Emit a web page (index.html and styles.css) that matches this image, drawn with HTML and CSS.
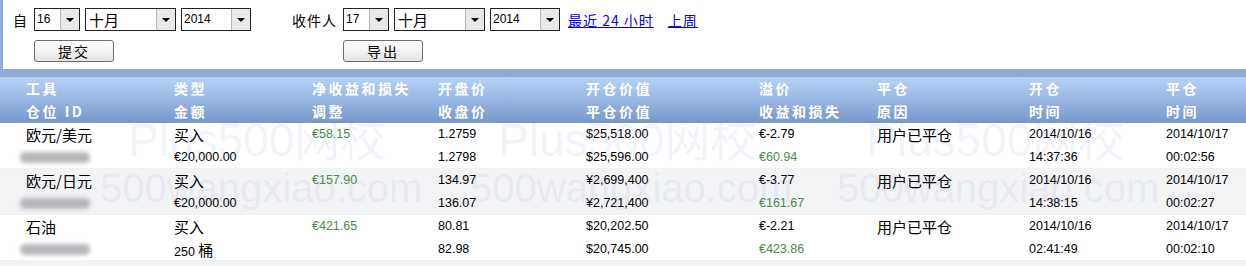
FILE: index.html
```html
<!DOCTYPE html>
<html lang="zh-CN">
<head>
    <meta charset="UTF-8">
    <title>平仓头寸</title>
    <link rel="stylesheet" href="styles.css">
</head>
<body>
    <div class="filter-panel">
        <div class="filter-group">
            <span class="filter-label">自</span>
            <div class="controls">
                <div class="dropdown day"><span class="dropdown-value">16</span><span class="dropdown-arrow"></span></div>
                <div class="dropdown month"><span class="dropdown-value cn">十月</span><span class="dropdown-arrow"></span></div>
                <div class="dropdown year"><span class="dropdown-value">2014</span><span class="dropdown-arrow"></span></div>
            </div>
            <span></span>
            <button class="btn">提交</button>
        </div>
        <div class="filter-group">
            <span class="filter-label">收件人</span>
            <div class="controls">
                <div class="dropdown day"><span class="dropdown-value">17</span><span class="dropdown-arrow"></span></div>
                <div class="dropdown month"><span class="dropdown-value cn">十月</span><span class="dropdown-arrow"></span></div>
                <div class="dropdown year"><span class="dropdown-value">2014</span><span class="dropdown-arrow"></span></div>
                <a href="#" class="quick-link">最近 24 小时</a>
                <a href="#" class="quick-link">上周</a>
            </div>
            <span></span>
            <button class="btn">导出</button>
        </div>
    </div>

    <div class="positions">
        <div class="row head">
            <div><span>工具</span><span>仓位 ID</span></div>
            <div><span>类型</span><span>金额</span></div>
            <div><span>净收益和损失</span><span>调整</span></div>
            <div><span>开盘价</span><span>收盘价</span></div>
            <div><span>开仓价值</span><span>平仓价值</span></div>
            <div><span>溢价</span><span>收益和损失</span></div>
            <div><span>平仓</span><span>原因</span></div>
            <div><span>开仓</span><span>时间</span></div>
            <div><span>平仓</span><span>时间</span></div>
        </div>

        <div class="row">
            <div><span class="cn">欧元/美元</span><span><i class="blurred"></i></span></div>
            <div><span class="cn">买入</span><span>€20,000.00</span></div>
            <div><span class="gain">€58.15</span></div>
            <div><span>1.2759</span><span>1.2798</span></div>
            <div><span>$25,518.00</span><span>$25,596.00</span></div>
            <div><span>€-2.79</span><span class="gain">€60.94</span></div>
            <div><span class="cn">用户已平仓</span></div>
            <div><span>2014/10/16</span><span>14:37:36</span></div>
            <div><span>2014/10/17</span><span>00:02:56</span></div>
        </div>

        <div class="row alt">
            <div><span class="cn">欧元/日元</span><span><i class="blurred"></i></span></div>
            <div><span class="cn">买入</span><span>€20,000.00</span></div>
            <div><span class="gain">€157.90</span></div>
            <div><span>134.97</span><span>136.07</span></div>
            <div><span>¥2,699,400</span><span>¥2,721,400</span></div>
            <div><span>€-3.77</span><span class="gain">€161.67</span></div>
            <div><span class="cn">用户已平仓</span></div>
            <div><span>2014/10/16</span><span>14:38:15</span></div>
            <div><span>2014/10/17</span><span>00:02:27</span></div>
        </div>

        <div class="row">
            <div><span class="cn">石油</span><span><i class="blurred"></i></span></div>
            <div><span class="cn">买入</span><span>250 <b class="cn">桶</b></span></div>
            <div><span class="gain">€421.65</span></div>
            <div><span>80.81</span><span>82.98</span></div>
            <div><span>$20,202.50</span><span>$20,745.00</span></div>
            <div><span>€-2.21</span><span class="gain">€423.86</span></div>
            <div><span class="cn">用户已平仓</span></div>
            <div><span>2014/10/16</span><span>02:41:49</span></div>
            <div><span>2014/10/17</span><span>00:02:10</span></div>
        </div>

        <div class="row alt">
            <div><span class="cn">英镑/美元</span><span><i class="blurred"></i></span></div>
            <div><span class="cn">卖出</span><span>€20,000.00</span></div>
            <div><span class="gain">€12.40</span></div>
            <div><span>1.6012</span><span>1.6005</span></div>
            <div><span>$32,024.00</span><span>$32,010.00</span></div>
            <div><span>€-1.95</span><span class="gain">€14.35</span></div>
            <div><span class="cn">用户已平仓</span></div>
            <div><span>2014/10/16</span><span>15:02:11</span></div>
            <div><span>2014/10/17</span><span>00:01:48</span></div>
        </div>

        <div class="watermark">
            <span class="wm-big" style="left: 128px; top: -6px">Plus500网校</span>
            <span class="wm-big" style="left: 498px; top: -6px">Plus500网校</span>
            <span class="wm-big" style="left: 866px; top: -6px">Plus500网校</span>
            <span class="wm-small" style="left: 100px; top: 45px">500wangxiao.com</span>
            <span class="wm-small" style="left: 470px; top: 45px">500wangxiao.com</span>
            <span class="wm-small" style="left: 837px; top: 45px">500wangxiao.com</span>
        </div>
    </div>
</body>
</html>
```

FILE: styles.css
```css
body {
    margin: 0;
    font-family: "Liberation Sans", "Noto Sans CJK SC", sans-serif;
    color: #000;
    background-color: #fff;
    overflow: hidden;
}

.filter-panel {
    display: flex;
    gap: 41px;
    height: 61px;
    padding: 8px 0 0 10px;
    border-left: 3px solid #8eaed8;
    border-bottom: 8px solid #8cabd7;
}

.filter-group {
    display: grid;
    grid-template-columns: auto auto;
    grid-template-rows: 23px 22px;
    column-gap: 6px;
    row-gap: 9px;
    align-items: center;
    justify-items: start;
}

.filter-label {
    font-family: "Noto Sans CJK SC", sans-serif;
    font-size: 14px;
    line-height: 20px;
    letter-spacing: 1px;
}

.controls {
    display: flex;
    align-items: center;
    gap: 5px;
    height: 23px;
}

.dropdown {
    display: flex;
    height: 21px;
    border: 1px solid #222;
    background-color: #fff;
}

.dropdown.day { width: 44px; }
.dropdown.month { width: 89px; }
.dropdown.year { width: 68px; }

.dropdown-value {
    flex: 1;
    padding-left: 2px;
    font-size: 12px;
    line-height: 21px;
}

.dropdown-value.cn {
    font-family: "Noto Sans CJK SC", sans-serif;
    font-size: 15px;
    padding-left: 3px;
}

.dropdown-arrow {
    position: relative;
    width: 18px;
    border-left: 1px solid #b5b5b5;
    background-color: #e9e9e9;
}

.dropdown-arrow::after {
    content: "";
    position: absolute;
    left: 5px;
    top: 9px;
    border-left: 4px solid transparent;
    border-right: 4px solid transparent;
    border-top: 4px solid #000;
}

.quick-link {
    font-family: "Noto Sans CJK SC", sans-serif;
    font-size: 14px;
    line-height: 20px;
    letter-spacing: 1px;
    color: #0000ee;
    margin-left: 3px;
    margin-right: 6px;
}

.btn {
    width: 80px;
    height: 22px;
    padding: 0;
    border: 1px solid #6e6e6e;
    border-radius: 3px;
    background: linear-gradient(#fefefe 0%, #f3f3f3 50%, #e3e3e3 100%);
    font-family: "Noto Sans CJK SC", sans-serif;
    font-size: 14px;
    letter-spacing: 2px;
    line-height: 20px;
    color: #000;
}

.positions {
    position: relative;
}

.row {
    display: grid;
    grid-template-columns: 148px 138px 126px 148px 173px 118px 152px 137px 1fr;
    padding-left: 26px;
    height: 45px;
    font-size: 12.5px;
    border-bottom: 1px solid #f0f1f3;
}

.row > div > span {
    display: block;
    height: 23px;
    line-height: 23px;
    white-space: nowrap;
}

.row.alt {
    background-color: #f2f3f5;
}

.row.head {
    background: linear-gradient(#b6d3f6 0%, #97b5e2 50%, #7897c9 100%);
    color: #fff;
    font-family: "Noto Sans CJK SC", sans-serif;
    font-weight: 700;
    font-size: 14px;
    letter-spacing: 2.5px;
    border-bottom: none;
    height: 46px;
    position: relative;
    z-index: 2;
}

.cn {
    font-family: "Noto Sans CJK SC", sans-serif;
    font-size: 15px;
    font-weight: 400;
}

.gain {
    color: #4c8a4c;
}

.blurred {
    display: inline-block;
    width: 70px;
    height: 11px;
    margin-left: -6px;
    vertical-align: middle;
    background-color: #b7b7bb;
    border-radius: 5px;
    filter: blur(2px);
}

.watermark {
    position: absolute;
    left: 0;
    top: 46px;
    right: 0;
    height: 100px;
    overflow: hidden;
    pointer-events: none;
    color: rgba(70, 70, 190, 0.075);
    z-index: 1;
}

.wm-big,
.wm-small {
    position: absolute;
    white-space: nowrap;
    font-family: "Liberation Sans", "Noto Sans CJK SC", sans-serif;
    line-height: 1;
}

.wm-big {
    font-size: 46px;
}

.wm-small {
    font-size: 40px;
}
```
